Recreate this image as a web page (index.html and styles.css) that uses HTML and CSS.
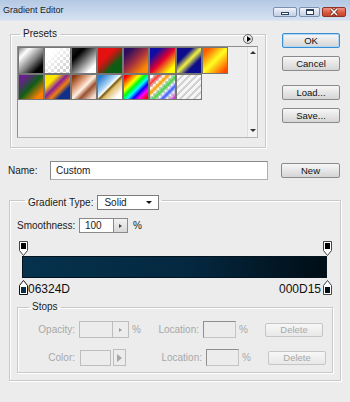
FILE: index.html
```html
<!DOCTYPE html>
<html>
<head>
<meta charset="utf-8">
<link rel="stylesheet" href="styles.css">
</head>
<body>
<div class="titlebar">
  <span class="title">Gradient Editor</span>
  <div class="winbtns">
    <span class="wb min"><i></i></span>
    <span class="wb max"><i></i></span>
    <span class="wb close"><svg width="12" height="8" viewBox="0 0 12 8"><path d="M3 1L9 7M9 1L3 7" stroke="#5a1a10" stroke-width="3"/><path d="M3 1L9 7M9 1L3 7" stroke="#fff" stroke-width="1.6"/></svg></span>
  </div>
</div>

<div class="top">
  <fieldset class="presets">
    <legend>Presets</legend>
    <span class="menu-btn"><i></i></span>
    <div class="panel">
      <div class="swatches">
        <span class="sw s1"></span><span class="sw s2"></span><span class="sw s3"></span><span class="sw s4"></span>
        <span class="sw s5"></span><span class="sw s6"></span><span class="sw s7"></span><span class="sw s8"></span>
        <span class="sw s9"></span><span class="sw s10"></span><span class="sw s11"></span><span class="sw s12"></span>
        <span class="sw s13"></span><span class="sw s14"></span><span class="sw s15"></span>
      </div>
      <div class="scroll"><span class="up"></span><span class="down"></span></div>
    </div>
  </fieldset>
  <div class="buttons">
    <div class="btn ok">OK</div>
    <div class="btn cancel">Cancel</div>
    <div class="btn load">Load...</div>
    <div class="btn save">Save...</div>
  </div>
</div>

<div class="name-row">
  <span class="name-label">Name:</span>
  <span class="name-input">Custom</span>
  <div class="btn new">New</div>
</div>

<fieldset class="grad">
  <legend><span class="gt-label">Gradient Type:</span><span class="select">Solid<i></i></span></legend>
  <div class="smooth-row">
    <span class="smooth-label">Smoothness:</span>
    <span class="numbox">100</span><span class="stepper"><i></i></span>
    <span class="pct">%</span>
  </div>
  <div class="marker-row">
    <svg class="mk" width="9" height="15" viewBox="0 0 9 15"><path d="M0.5 0.5H8.5V9.5L4.5 14.5L0.5 9.5Z" fill="#fff" stroke="#444"/><rect x="2" y="2" width="5" height="6" fill="#000"/></svg>
    <svg class="mk" width="9" height="15" viewBox="0 0 9 15"><path d="M0.5 0.5H8.5V9.5L4.5 14.5L0.5 9.5Z" fill="#fff" stroke="#444"/><rect x="2" y="2" width="5" height="6" fill="#000"/></svg>
  </div>
  <div class="bar"></div>
  <div class="marker-row bottom">
    <div class="stop-left">
      <svg class="mk" width="9" height="15" viewBox="0 0 9 15"><path d="M4.5 0.5L8.5 5.5V14.5H0.5V5.5Z" fill="#fff" stroke="#111"/><rect x="2" y="7" width="5" height="6" fill="#06324D"/></svg>
      <span class="hex">06324D</span>
    </div>
    <div class="stop-right">
      <span class="hex">000D15</span>
      <svg class="mk" width="9" height="15" viewBox="0 0 9 15"><path d="M4.5 0.5L8.5 5.5V14.5H0.5V5.5Z" fill="#fff" stroke="#444"/><rect x="2" y="7" width="5" height="6" fill="#000D15"/></svg>
    </div>
  </div>

  <fieldset class="stops">
    <legend>Stops</legend>
    <div class="stop-row">
      <span class="dl">Opacity:</span>
      <span class="dbox op"></span><span class="dstep"><i></i></span>
      <span class="dpct">%</span>
      <span class="dloc">Location:</span>
      <span class="lbox"></span>
      <span class="dpct2">%</span>
      <span class="del">Delete</span>
    </div>
    <div class="stop-row">
      <span class="dl">Color:</span>
      <span class="dbox col"></span><span class="darrow"><i></i></span>
      <span class="dpct"></span>
      <span class="dloc">Location:</span>
      <span class="lbox"></span>
      <span class="dpct2">%</span>
      <span class="del">Delete</span>
    </div>
  </fieldset>
</fieldset>
</body>
</html>
```
FILE: styles.css
```css
* { box-sizing: border-box; }
html, body { margin: 0; padding: 0; }
body {
  width: 350px;
  height: 402px;
  overflow: hidden;
  background: #ececec;
  font-family: "Liberation Sans", Arial, sans-serif;
  font-size: 10px;
  color: #1a1a1a;
}

/* title bar */
.titlebar {
  height: 21px;
  display: flex;
  align-items: center;
  justify-content: space-between;
  padding: 0 4px 0 3px;
  background: linear-gradient(#b3c8e3, #c6d6ec 55%, #d4e1f1);
  border-bottom: 1px solid #dfe6ef;
}
.title { font-size: 9px; color: #1b1b1b; }
.winbtns { display: flex; gap: 2px; margin-top: 3px; }
.wb {
  height: 10px;
  border: 1px solid #7b90b0;
  border-radius: 2px;
  background: linear-gradient(#f3f6fb, #d2ddec 60%, #c3d1e5);
  display: flex;
  align-items: center;
  justify-content: center;
}
.min { width: 24px; }
.max { width: 21px; }
.close {
  width: 24px;
  border-color: #8e3325;
  background: linear-gradient(#f09080, #d9583f 55%, #c8432c);
}
.min i { width: 8px; height: 3px; border: 1px solid #2b3f60; margin-top: 3px; background: #fff; }
.max i { width: 8px; height: 6px; border: 1px solid #2b3f60; border-top-width: 2px; background: #fff; }

/* top area */
.top {
  display: flex;
  margin-top: 7px;
  padding-left: 10px;
}
.presets {
  position: relative;
  margin: 0;
  width: 256px;
  height: 120px;
  padding: 0 7px 0 6px;
  border: 1px solid #c9c9c9;
  box-shadow: inset 1px 1px 0 #fff, 1px 1px 0 #fff;
}
.presets legend {
  padding: 0 3px;
  margin-left: 3px;
  line-height: 12px;
  font-size: 10px;
}
.menu-btn {
  position: absolute;
  right: 12px;
  top: -6px;
  width: 10px;
  height: 10px;
  border-radius: 50%;
  border: 1px solid #666;
  background: radial-gradient(circle at 40% 35%, #fff, #cfcfcf);
  display: flex;
  align-items: center;
  justify-content: center;
}
.menu-btn i {
  width: 0; height: 0;
  border-top: 3px solid transparent;
  border-bottom: 3px solid transparent;
  border-left: 4px solid #000;
  margin-left: 1px;
}
.panel {
  margin-top: 6px;
  width: 241px;
  height: 92px;
  display: flex;
  border: 1px solid #8e8e8e;
  border-right-color: #b5b5b5;
  border-bottom-color: #b5b5b5;
  background: #eeeeee;
}
.swatches {
  flex: 1;
  display: grid;
  grid-template-columns: repeat(8, 26.3px);
  grid-auto-rows: 26.5px;
  align-content: start;
}
.sw { border: 1px solid #767676; }
.checker, .s2, .s14 {
  background-size: 6px 6px;
}
.s1 { background: linear-gradient(135deg, #8a8a8a 0%, #fff 22%, #808080 55%, #000 82%); }
.s2 { background: linear-gradient(135deg, #fff 22%, rgba(255,255,255,0) 80%), repeating-conic-gradient(#d2d2d2 0 25%, #fff 0 50%) 0 0 / 6px 6px; }
.s3 { background: linear-gradient(135deg, #1a1a1a 0%, #000 25%, #fff 82%); }
.s4 { background: linear-gradient(135deg, #e51010 35%, #8a2a12 52%, #0d5c14 68%); }
.s5 { background: linear-gradient(135deg, #2a0d5e 15%, #a5303e 50%, #ff8a00 85%); }
.s6 { background: linear-gradient(135deg, #0d0da5 20%, #e3002d 50%, #ffff00 85%); }
.s7 { background: linear-gradient(135deg, #0c0c8c 30%, #f2f240 50%, #0c0c8c 70%); }
.s8 { background: linear-gradient(135deg, #ff5a00 12%, #ffff20 50%, #ff4a00 92%); }
.s9 { background: linear-gradient(135deg, #6a1f8f 15%, #0f5e18 50%, #ff8000 85%); }
.s10 { background: linear-gradient(135deg, #ffe800 25%, #8c2092 45%, #f08010 60%, #0f2f8a 75%); }
.s11 { background: linear-gradient(135deg, #8a3a10 8%, #dd9c78 32%, #fff0e2 50%, #9a5030 66%, #f2dccc 90%); }
.s12 { background: linear-gradient(135deg, #2a80d0 10%, #b8dcf8 40%, #fff 47%, #7a5a10 52%, #e0c070 60%, #fff 85%); }
.s13 { background: linear-gradient(135deg, #ff0000 8%, #ff8000 20%, #ffff00 32%, #00ff00 44%, #00ffff 56%, #0000ff 68%, #ff00ff 80%, #ff0000 94%); }
.s14 { background: linear-gradient(135deg, rgba(255,255,255,0) 8%, #ff3030 18%, rgba(255,255,255,0) 28%, #ffa000 38%, rgba(255,255,255,0) 46%, #40d040 56%, rgba(255,255,255,0) 64%, #4060ff 74%, rgba(255,255,255,0) 84%, #c040c0 96%), repeating-conic-gradient(#d2d2d2 0 25%, #fff 0 50%) 0 0 / 6px 6px; }
.s15 { background: repeating-linear-gradient(135deg, #f6f6f6 0 3px, #d2d2d2 3px 5px); }

.scroll {
  width: 10px;
  border-left: 1px solid #dedede;
  background: #f2f2f2;
  display: flex;
  flex-direction: column;
  justify-content: space-between;
  align-items: center;
  padding: 4px 0 5px;
}
.scroll .up {
  width: 0; height: 0;
  border-left: 3px solid transparent;
  border-right: 3px solid transparent;
  border-bottom: 3px solid #333;
}
.scroll .down {
  width: 0; height: 0;
  border-left: 3px solid transparent;
  border-right: 3px solid transparent;
  border-top: 3px solid #333;
}

/* buttons */
.buttons {
  display: flex;
  flex-direction: column;
  width: 58px;
  margin-left: 16px;
  padding-top: 5px;
}
.btn {
  height: 15px;
  border: 1px solid #8b8b8b;
  border-radius: 2px;
  background: linear-gradient(#f7f7f7, #e6e6e6 50%, #d5d5d5);
  text-align: center;
  line-height: 13px;
  font-size: 9.5px;
  color: #111;
}
.ok { border-color: #3a8fd2; box-shadow: inset 0 0 0 1px #aed6f4; }
.cancel { margin-top: 8px; }
.load { margin-top: 14px; }
.save { margin-top: 8px; }

/* name row */
.name-row {
  display: flex;
  align-items: center;
  height: 19px;
  margin-top: 13px;
  padding-left: 8px;
}
.name-label { width: 42px; }
.name-input {
  width: 218px;
  height: 19px;
  border: 1px solid #8a8a8a;
  border-right-color: #b0b0b0;
  border-bottom-color: #b0b0b0;
  background: #fff;
  padding-left: 5px;
  line-height: 17px;
}
.new { width: 59px; margin-left: 13px; }

/* gradient group */
.grad {
  margin: 10px 0 0 9px;
  width: 330px;
  padding: 0 7px 7px 7px;
  border: 1px solid #c9c9c9;
  box-shadow: inset 1px 1px 0 #fff, 1px 1px 0 #fff;
}
.grad > legend {
  padding: 5px 3px 0 3px;
  margin-left: 8px;
  display: flex;
  align-items: center;
  height: 20px;
}
.gt-label { font-size: 10px; }
.select {
  margin-left: 4px;
  width: 62px;
  height: 15px;
  border: 1px solid #7c7c7c;
  background: #fff;
  padding-left: 6px;
  line-height: 13px;
  display: flex;
  align-items: center;
  justify-content: space-between;
  padding-right: 6px;
}
.select i {
  width: 0; height: 0;
  border-left: 3px solid transparent;
  border-right: 3px solid transparent;
  border-top: 3px solid #111;
}
.smooth-row {
  display: flex;
  align-items: center;
  height: 15px;
  margin-top: 8px;
}
.smooth-label { width: 62px; }
.numbox {
  width: 34px;
  height: 15px;
  border: 1px solid #8a8a8a;
  border-right: none;
  background: #fff;
  padding-left: 5px;
  line-height: 13px;
}
.stepper {
  width: 15px;
  height: 15px;
  border: 1px solid #8a8a8a;
  background: linear-gradient(#f2f2f2, #d8d8d8);
  display: flex;
  align-items: center;
  justify-content: center;
}
.stepper i {
  width: 0; height: 0;
  border-top: 2px solid transparent;
  border-bottom: 2px solid transparent;
  border-left: 3px solid #444;
}
.pct { margin-left: 5px; }

.marker-row {
  display: flex;
  justify-content: space-between;
  height: 15px;
  margin-top: 8px;
  padding: 0 1px 0 2px;
}
.mk { display: block; }
.bar {
  margin-left: 5px;
  width: 305px;
  height: 22px;
  border: 1px solid #02141f;
  background: linear-gradient(90deg, #06324D, #042840 55%, #000D15);
}
.marker-row.bottom { margin-top: 2px; }
.stop-left, .stop-right {
  display: flex;
  align-items: flex-end;
}
.hex {
  font-size: 12px;
  line-height: 12px;
  color: #111;
  margin-bottom: 0;
}
.stop-left .hex { margin-left: 0; }
.stop-right .hex { margin-right: 2px; }

/* stops group */
.stops {
  margin: 6px 0 0 0;
  width: 314px;
  padding: 8px 6px 6px 0;
  border: 1px solid #c9c9c9;
  box-shadow: inset 1px 1px 0 #fff, 1px 1px 0 #fff;
}
.stops legend {
  padding: 0 3px;
  margin-left: 11px;
  line-height: 12px;
  color: #222;
}
.stop-row {
  display: flex;
  align-items: center;
  height: 17px;
  color: #a8a8a8;
}
.stop-row + .stop-row { margin-top: 11px; }
.dl { width: 57px; text-align: right; }
.dbox {
  margin-left: 4px;
  height: 17px;
  border: 1px solid #bdbdbd;
}
.dbox.op { width: 33px; border-right: none; }
.dbox.col { width: 31px; height: 16px; margin-left: 5px; }
.dstep {
  width: 17px;
  height: 17px;
  border: 1px solid #bdbdbd;
  display: flex;
  align-items: center;
  justify-content: center;
}
.dstep i {
  width: 0; height: 0;
  border-top: 2px solid transparent;
  border-bottom: 2px solid transparent;
  border-left: 3px solid #9a9a9a;
}
.darrow {
  margin-left: 2px;
  width: 13px;
  height: 17px;
  border: 1px solid #bdbdbd;
  display: flex;
  align-items: center;
  justify-content: center;
}
.darrow i {
  width: 0; height: 0;
  border-top: 4px solid transparent;
  border-bottom: 4px solid transparent;
  border-left: 5px solid #a6a6a6;
}
.dpct { margin-left: 3px; width: 12px; }
.dloc { width: 55px; text-align: right; }
.stop-row .darrow + .dpct { margin-left: 3px; width: 18px; }
.lbox {
  margin-left: 4px;
  width: 33px;
  height: 17px;
  border: 1px solid #8f8f8f;
  border-right-color: #c4c4c4;
  border-bottom-color: #c4c4c4;
}
.dpct2 { margin-left: 3px; width: 12px; }
.del {
  margin-left: 14px;
  width: 58px;
  height: 14px;
  border: 1px solid #c6c6c6;
  border-radius: 2px;
  background: linear-gradient(#f7f7f7, #e8e8e8);
  text-align: center;
  line-height: 12px;
  font-size: 9.5px;
  color: #a8a8a8;
}
```
